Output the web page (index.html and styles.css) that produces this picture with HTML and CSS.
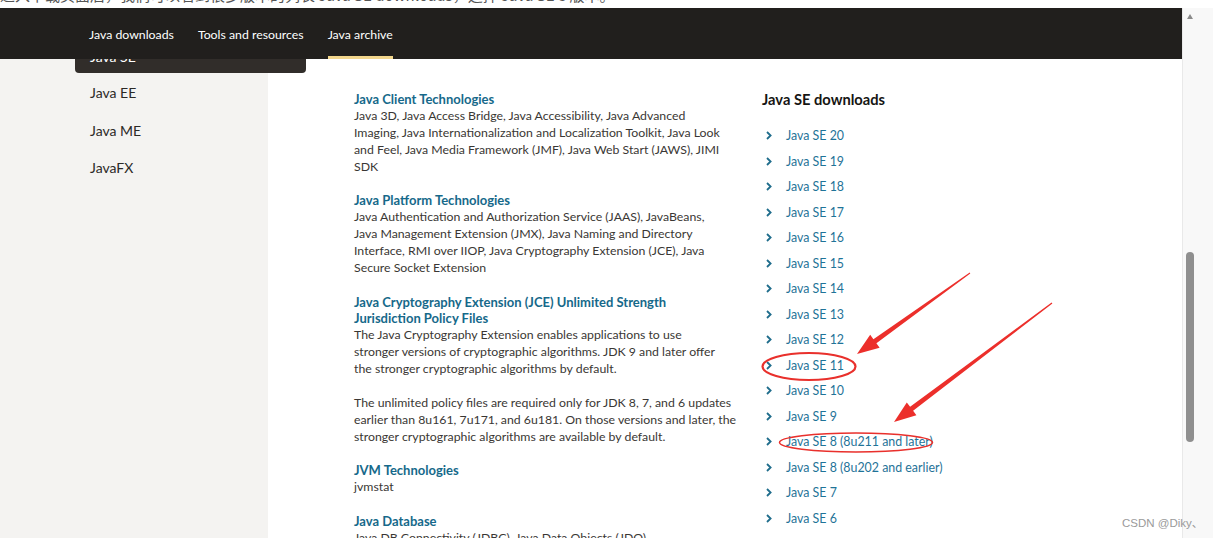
FILE: index.html
```html
<!DOCTYPE html>
<html lang="en">
<head>
<meta charset="utf-8">
<title>Java Archive</title>
<link rel="stylesheet" href="styles.css">
</head>
<body>
<div class="top-strip"><p class="caption">进入下载页面后，我们可以看到很多版本的列表 Java SE downloads，选择 Java SE 8 版本。</p></div>
<div class="frame">
  <div class="viewport">
    <header class="nav">
      <a class="nav-link">Java downloads</a>
      <a class="nav-link">Tools and resources</a>
      <a class="nav-link active">Java archive</a>
    </header>
    <div class="content">
      <aside class="sidebar">
        <div class="dropdown"><span>Java SE</span></div>
        <ul class="side-list">
          <li>Java EE</li>
          <li>Java ME</li>
          <li>JavaFX</li>
        </ul>
      </aside>
      <main class="main">
        <div class="tech">
          <section class="block">
            <h3>Java Client Technologies</h3>
            <p>Java 3D, Java Access Bridge, Java Accessibility, Java Advanced<br>Imaging, Java Internationalization and Localization Toolkit, Java Look<br>and Feel, Java Media Framework (JMF), Java Web Start (JAWS), JIMI<br>SDK</p>
          </section>
          <section class="block">
            <h3>Java Platform Technologies</h3>
            <p>Java Authentication and Authorization Service (JAAS), JavaBeans,<br>Java Management Extension (JMX), Java Naming and Directory<br>Interface, RMI over IIOP, Java Cryptography Extension (JCE), Java<br>Secure Socket Extension</p>
          </section>
          <section class="block">
            <h3>Java Cryptography Extension (JCE) Unlimited Strength<br>Jurisdiction Policy Files</h3>
            <p>The Java Cryptography Extension enables applications to use<br>stronger versions of cryptographic algorithms. JDK 9 and later offer<br>the stronger cryptographic algorithms by default.</p>
            <p class="gap">The unlimited policy files are required only for JDK 8, 7, and 6 updates<br>earlier than 8u161, 7u171, and 6u181. On those versions and later, the<br>stronger cryptographic algorithms are available by default.</p>
          </section>
          <section class="block">
            <h3>JVM Technologies</h3>
            <p>jvmstat</p>
          </section>
          <section class="block">
            <h3>Java Database</h3>
            <p>Java DB Connectivity (JDBC), Java Data Objects (JDO)</p>
          </section>
        </div>
        <div class="downloads">
          <h2>Java SE downloads</h2>
          <ul class="dl-list">
            <li><svg class="chev" viewBox="0 0 6 9"><path d="M1 1l3.6 3.5L1 8"/></svg><a>Java SE 20</a></li>
            <li><svg class="chev" viewBox="0 0 6 9"><path d="M1 1l3.6 3.5L1 8"/></svg><a>Java SE 19</a></li>
            <li><svg class="chev" viewBox="0 0 6 9"><path d="M1 1l3.6 3.5L1 8"/></svg><a>Java SE 18</a></li>
            <li><svg class="chev" viewBox="0 0 6 9"><path d="M1 1l3.6 3.5L1 8"/></svg><a>Java SE 17</a></li>
            <li><svg class="chev" viewBox="0 0 6 9"><path d="M1 1l3.6 3.5L1 8"/></svg><a>Java SE 16</a></li>
            <li><svg class="chev" viewBox="0 0 6 9"><path d="M1 1l3.6 3.5L1 8"/></svg><a>Java SE 15</a></li>
            <li><svg class="chev" viewBox="0 0 6 9"><path d="M1 1l3.6 3.5L1 8"/></svg><a>Java SE 14</a></li>
            <li><svg class="chev" viewBox="0 0 6 9"><path d="M1 1l3.6 3.5L1 8"/></svg><a>Java SE 13</a></li>
            <li><svg class="chev" viewBox="0 0 6 9"><path d="M1 1l3.6 3.5L1 8"/></svg><a>Java SE 12</a></li>
            <li><svg class="chev" viewBox="0 0 6 9"><path d="M1 1l3.6 3.5L1 8"/></svg><a>Java SE 11</a></li>
            <li><svg class="chev" viewBox="0 0 6 9"><path d="M1 1l3.6 3.5L1 8"/></svg><a>Java SE 10</a></li>
            <li><svg class="chev" viewBox="0 0 6 9"><path d="M1 1l3.6 3.5L1 8"/></svg><a>Java SE 9</a></li>
            <li><svg class="chev" viewBox="0 0 6 9"><path d="M1 1l3.6 3.5L1 8"/></svg><a>Java SE 8 (8u211 and later)</a></li>
            <li><svg class="chev" viewBox="0 0 6 9"><path d="M1 1l3.6 3.5L1 8"/></svg><a>Java SE 8 (8u202 and earlier)</a></li>
            <li><svg class="chev" viewBox="0 0 6 9"><path d="M1 1l3.6 3.5L1 8"/></svg><a>Java SE 7</a></li>
            <li><svg class="chev" viewBox="0 0 6 9"><path d="M1 1l3.6 3.5L1 8"/></svg><a>Java SE 6</a></li>
            <li><svg class="chev" viewBox="0 0 6 9"><path d="M1 1l3.6 3.5L1 8"/></svg><a>Java SE 5</a></li>
          </ul>
        </div>
      </main>
    </div>
  </div>
  <div class="scrollbar">
    <span class="arrow-up"></span>
    <span class="thumb"></span>
  </div>
</div>
<svg class="annotations" width="1213" height="538" viewBox="0 0 1213 538">
  <polygon class="mark" points="970.3,273.4 876.4,343.2 879.6,347.7 857,354 870.2,334.7 873.4,339.2 969.7,272.6"/>
  <polygon class="mark" points="1052.4,303.5 913.1,410.8 916.4,415.2 894,422 906.8,402.4 910.1,406.8 1051.6,302.5"/>
  <ellipse class="ring" cx="809" cy="366.5" rx="46.5" ry="13.5"/>
  <ellipse class="ring thin" cx="856" cy="442.5" rx="76.5" ry="9.5"/>
</svg>
<div class="watermark">CSDN @Diky、</div>
</body>
</html>
```
FILE: styles.css
```css
* { box-sizing: border-box; }
html, body { margin: 0; padding: 0; }
body {
  width: 1213px;
  height: 538px;
  overflow: hidden;
  position: relative;
  background: #ffffff;
  font-family: Lato, "Noto Sans", "Liberation Sans", sans-serif;
  color: #3a3734;
}
.top-strip {
  height: 8px;
  overflow: hidden;
  background: #ffffff;
}
.caption {
  margin: -13px 0 0 0;
  font-family: "Noto Sans CJK SC", "Noto Sans", sans-serif;
  font-size: 15px;
  line-height: 16px;
  color: #555555;
  white-space: nowrap;
}
.frame {
  display: flex;
  height: 530px;
  overflow: hidden;
}
.viewport {
  flex: 0 0 1182px;
  display: flex;
  flex-direction: column;
  min-height: 0;
}
.nav {
  flex: 0 0 51px;
  height: 51px;
  background: #211f1d;
  display: flex;
  align-items: stretch;
  gap: 24px;
  padding-left: 89px;
}
.nav-link {
  position: relative;
  display: flex;
  align-items: center;
  color: #ffffff;
  font-size: 12.3px;
  padding-top: 1px;
}
.nav-link.active::after {
  content: "";
  position: absolute;
  left: 0;
  right: 0;
  bottom: 0;
  height: 3px;
  background: #f2d68c;
}
.content {
  flex: 1 1 auto;
  min-height: 0;
  overflow: hidden;
  display: flex;
  position: relative;
}
.sidebar {
  flex: 0 0 268px;
  background: #f4f3f1;
  padding-top: 15px;
}
.dropdown {
  position: absolute;
  left: 75px;
  top: 0;
  width: 231px;
  height: 14px;
  background: #312d2a;
  border-radius: 0 0 4px 4px;
  overflow: hidden;
  padding-left: 15px;
}
.dropdown span {
  display: block;
  margin-top: -10px;
  line-height: 16px;
  font-size: 14px;
  color: #ffffff;
}
.side-list {
  list-style: none;
  margin: 0;
  padding: 0 0 0 90px;
}
.side-list li {
  line-height: 37.5px;
  font-size: 14px;
  color: #2b2926;
}
.main {
  flex: 1;
  display: flex;
  gap: 32px;
  padding: 32px 0 0 86px;
}
.tech {
  flex: 0 0 376px;
  min-width: 0;
}
.block {
  margin-bottom: 16.88px;
}
.block h3 {
  margin: 0;
  font-size: 13px;
  line-height: 16.88px;
  font-weight: 700;
  color: #16698a;
  white-space: nowrap;
}
.block p {
  margin: 0;
  font-size: 12.3px;
  line-height: 16.88px;
  color: #3a3734;
  white-space: nowrap;
}
.block p.gap {
  margin-top: 16.88px;
}
.downloads {
  padding-top: 0;
  margin-top: -1px;
}
.downloads h2 {
  margin: 0;
  font-size: 14.7px;
  line-height: 18px;
  font-weight: 700;
  color: #161513;
}
.dl-list {
  list-style: none;
  margin: 15px 0 0 0;
  padding: 0 0 0 4px;
}
.dl-list li {
  display: flex;
  align-items: center;
  height: 25.53px;
}
.chev {
  width: 6px;
  height: 9px;
  margin-right: 14px;
  fill: none;
  stroke: #1f6d8c;
  stroke-width: 1.8;
}
.dl-list a {
  font-size: 12.4px;
  color: #1f7398;
  white-space: nowrap;
}
.scrollbar {
  flex: 1;
  background: #f8f8f8;
  border-left: 1px solid #e9e9e9;
  display: flex;
  flex-direction: column;
  padding-left: 3px;
}
.arrow-up {
  flex: 0 0 auto;
  width: 0;
  height: 0;
  margin: 6px 0 0 1px;
  border-left: 3.5px solid transparent;
  border-right: 3.5px solid transparent;
  border-bottom: 5px solid #8a8a8a;
}
.thumb {
  flex: 0 0 190px;
  width: 8px;
  height: 190px;
  margin-top: 233px;
  border-radius: 4px;
  background: #8f8f8f;
}
.annotations {
  position: absolute;
  left: 0;
  top: 0;
  pointer-events: none;
}
.mark {
  fill: #ec2f2b;
}
.ring {
  fill: none;
  stroke: #e9302c;
  stroke-width: 2.2;
}
.ring.thin {
  stroke-width: 1.5;
}
.watermark {
  position: absolute;
  left: 1122px;
  top: 514px;
  font-family: "Liberation Sans", "Noto Sans CJK SC", sans-serif;
  font-size: 11.5px;
  color: #9a9a9a;
  white-space: nowrap;
}
```
